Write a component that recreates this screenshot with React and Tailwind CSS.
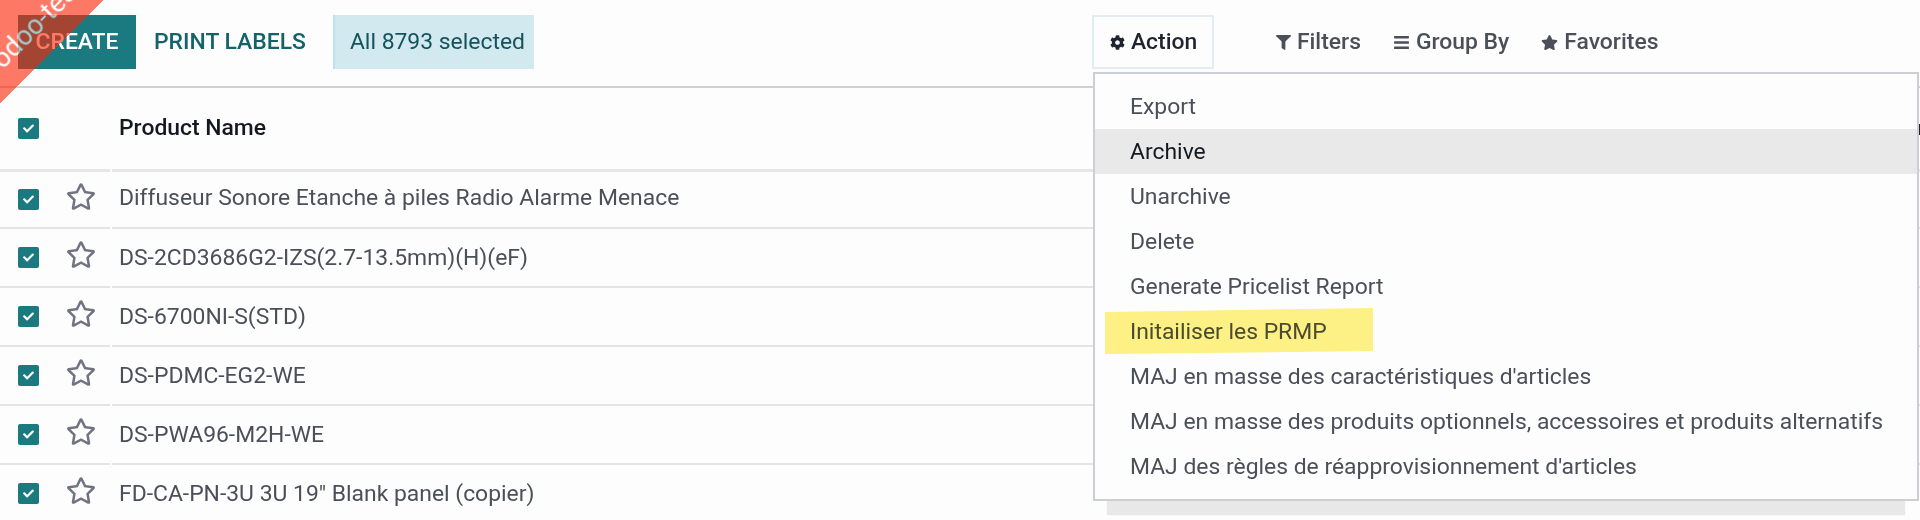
import React from "react";
import { FaCog, FaFilter, FaBars, FaStar, FaRegStar, FaCheck } from "react-icons/fa";

const rows = [
  "Diffuseur Sonore Etanche à piles Radio Alarme Menace",
  "DS-2CD3686G2-IZS(2.7-13.5mm)(H)(eF)",
  "DS-6700NI-S(STD)",
  "DS-PDMC-EG2-WE",
  "DS-PWA96-M2H-WE",
  'FD-CA-PN-3U 3U 19" Blank panel (copier)',
];

const menu = [
  "Export",
  "Archive",
  "Unarchive",
  "Delete",
  "Generate Pricelist Report",
  "Initailiser les PRMP",
  "MAJ en masse des caractéristiques d'articles",
  "MAJ en masse des produits optionnels, accessoires et produits alternatifs",
  "MAJ des règles de réapprovisionnement d'articles",
];

function Check() {
  return (
    <span className="flex h-[21px] w-[21px] items-center justify-center rounded-[2px] bg-[#1b7a80] text-white">
      <FaCheck className="h-[11px] w-[11px]" />
    </span>
  );
}

export default function App() {
  return (
    <div className="relative h-[520px] w-[1920px] overflow-hidden bg-[#fdfdfd] font-['Roboto',sans-serif] text-[22.9px] text-[#4a4f59]">
      <div className="flex h-[88px] items-start border-b-2 border-[#d0d0d4] pt-[15px]">
        <div className="ml-[18px] flex h-[54px] w-[118px] items-center justify-center bg-[#1b7a80] font-medium text-white">CREATE</div>
        <div className="ml-[18px] flex h-[54px] items-center font-medium text-[#14636b]">PRINT LABELS</div>
        <div className="ml-[27px] flex h-[54px] w-[201px] items-center border-l-2 border-[#b9e3f0] bg-[#d2e9f0] pl-[15px] text-[#14535c]">All 8793 selected</div>
        <div className="ml-[558px] flex h-[54px] w-[122px] items-center gap-[6px] border-2 border-[#e0eef1] pl-[16px] font-medium text-[#1f2430]">
          <FaCog className="h-[15px] w-[15px]" />
          Action
        </div>
        <div className="ml-[62px] flex h-[54px] items-center gap-[6px] font-medium">
          <FaFilter className="h-[15px] w-[15px]" />
          Filters
        </div>
        <div className="ml-[32px] flex h-[54px] items-center gap-[6px] font-medium">
          <FaBars className="h-[17px] w-[17px]" />
          Group By
        </div>
        <div className="ml-[32px] flex h-[54px] items-center gap-[6px] font-medium">
          <FaStar className="h-[17px] w-[17px]" />
          Favorites
        </div>
      </div>

      <div className="flex h-[84px]">
        <div className="flex w-[110px] items-center border-b-[3px] border-[#e6e6e6] pl-[18px]"><Check /></div>
        <div className="ml-[2px] flex flex-1 items-center border-b-[3px] border-[#e6e6e6] pl-[7px] font-medium text-[#14181f]">Product Name</div>
      </div>

      <div>
        {rows.map((name, i) => (
          <div key={name} className={i === 0 ? "flex h-[57px]" : "flex h-[59px]"}>
            <div className="flex w-[110px] items-center border-b-2 border-[#e3e3e8] pl-[18px]">
              <div className={i === 0 ? "mb-[1px] w-[48px]" : "w-[48px]"}><Check /></div>
              <FaRegStar className="mb-[7px] h-[27px] w-[30px] text-[#6f7480]" />
            </div>
            <div className={`ml-[2px] flex flex-1 items-center border-b-2 border-[#e3e3e8] pl-[7px] ${i === 0 ? "pb-[2px]" : "pt-[2px]"}`}>{name}</div>
          </div>
        ))}
      </div>

      <div className="absolute top-[72px] left-[1093px] h-[429px] w-[826px] border-2 border-[#ccd0d4] bg-[#fdfdfd] py-[10px] shadow-[0_28px_1px_-14px_#e8e8e8]">
        {menu.map((m) => (
          <div key={m} className={`flex h-[45px] items-center pt-[1px] pl-[35px] ${m === "Archive" ? "bg-[#e9e9e9] text-[#14181f]" : ""}`}>{m}</div>
        ))}
      </div>

      <div className="absolute top-[124px] right-0 h-[11px] w-[1px] bg-[#1f2430]" />

      <svg className="absolute top-[308px] left-[1105px] mix-blend-multiply" width="269" height="47">
        <polygon points="0,4 268,0 268,43 0,46" fill="#fff285" />
      </svg>

      <div className="absolute top-[-13px] left-[-125px] flex h-[76px] w-[300px] -rotate-45 items-center justify-center bg-[#ff2200] pt-[15px] pl-[20px] text-[27px] text-white opacity-60">
        odoo-test
      </div>
    </div>
  );
}
